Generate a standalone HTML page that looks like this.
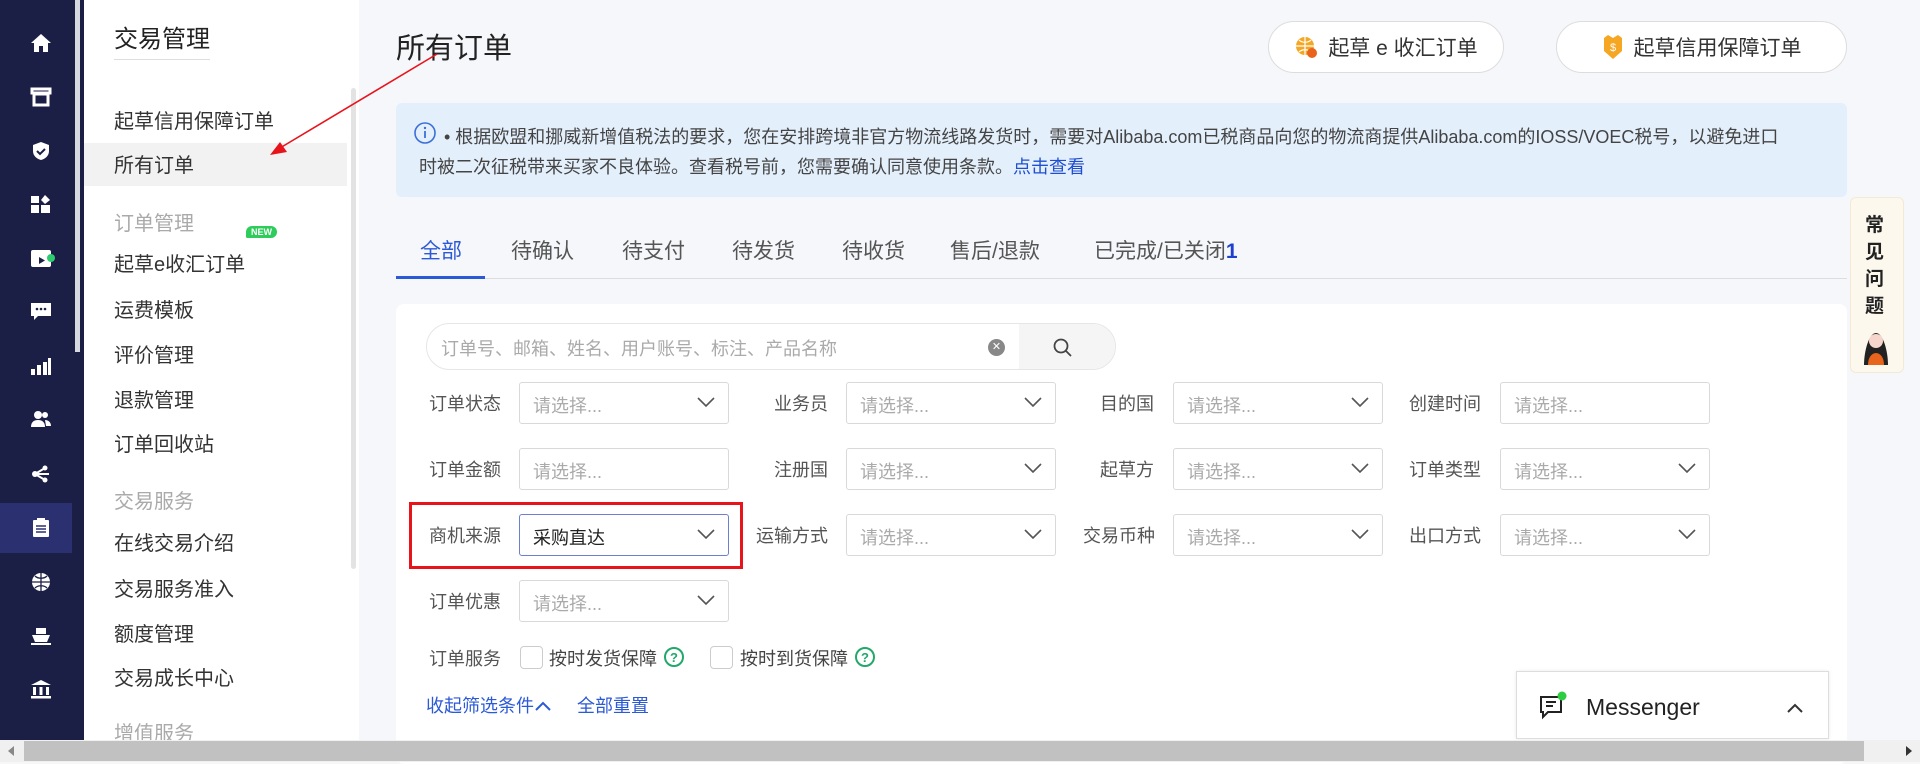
<!DOCTYPE html>
<html><head><meta charset="utf-8"><style>
*{margin:0;padding:0;box-sizing:border-box}
body{width:1920px;height:762px;overflow:hidden;background:#f5f7fa;font-family:"Liberation Sans","Noto Sans CJK SC",sans-serif;position:relative;color:#333}
.a{position:absolute;white-space:nowrap}
.nav{left:0;top:0;width:84px;height:740px;background:#1c1f45}
.ic{position:absolute;left:30px;width:22px;height:20px}
.menu{left:84px;top:0;width:275px;height:740px;background:#fff}
.mi{position:absolute;left:30px;font-size:20px;color:#333}
.mg{color:#aaa}
.btn{position:absolute;top:21px;height:52px;background:#fff;border:1px solid #ddd;border-radius:26px;font-size:21px;color:#333;display:flex;align-items:center;justify-content:center;gap:10px}
.tab{position:absolute;top:235px;font-size:21px;color:#555}
.lbl{position:absolute;font-size:18px;color:#555;text-align:right}
.sel{position:absolute;width:210px;height:42px;border:1px solid #d9d9d9;border-radius:3px;background:#fff;font-size:18px;color:#aaa;padding:9px 13px}
.sel svg{position:absolute;right:12px;top:13px}
</style></head><body>
<div class="a nav">
<div class="a" style="left:75px;top:0;width:5px;height:352px;background:#d8d8e0"></div>
<div class="a" style="left:0;top:503px;width:72px;height:50px;background:#2b3070"></div>
<svg class="ic" style="top:33px" viewBox="0 0 22 20"><path d="M11 1L1 10h3v9h5v-6h4v6h5v-9h3z" fill="#fff"/></svg>
<svg class="ic" style="top:87px" viewBox="0 0 22 20"><path d="M2 2h18v4H2zM4 7h14v11H4z" fill="none" stroke="#fff" stroke-width="3"/></svg>
<svg class="ic" style="top:141px" viewBox="0 0 22 20"><path d="M11 1l8 3v6c0 5-4 8-8 9-4-1-8-4-8-9V4z" fill="#fff"/><path d="M7 10l3 3 5-5" stroke="#1c1f45" stroke-width="2" fill="none"/></svg>
<svg class="ic" style="top:194px" viewBox="0 0 22 20"><rect x="1" y="2" width="8" height="7" fill="#fff"/><rect x="1" y="11" width="8" height="8" fill="#fff"/><rect x="11" y="11" width="9" height="8" fill="#fff"/><path d="M15 1l5 5-5 4-4-4z" fill="#fff"/></svg>
<svg class="ic" style="top:248px;width:26px" viewBox="0 0 26 20"><rect x="1" y="2" width="20" height="17" rx="2" fill="#fff"/><path d="M9 9v7l6-3.5z" fill="#1c1f45"/><circle cx="21" cy="10" r="4" fill="#2ecc71"/></svg>
<svg class="ic" style="top:301px" viewBox="0 0 22 20"><path d="M1 2h20v13H8l-4 4v-4H1z" fill="#fff"/><circle cx="7" cy="8" r="1.3" fill="#1c1f45"/><circle cx="11" cy="8" r="1.3" fill="#1c1f45"/><circle cx="15" cy="8" r="1.3" fill="#1c1f45"/></svg>
<svg class="ic" style="top:356px" viewBox="0 0 22 20"><rect x="1" y="13" width="4" height="6" fill="#fff"/><rect x="7" y="9" width="4" height="10" fill="#fff"/><rect x="13" y="6" width="4" height="13" fill="#fff"/><rect x="18" y="2" width="3" height="17" fill="#fff"/></svg>
<svg class="ic" style="top:409px" viewBox="0 0 22 20"><circle cx="8" cy="6" r="4" fill="#fff"/><path d="M1 18c0-5 3-7 7-7s7 2 7 7z" fill="#fff"/><circle cx="15" cy="6" r="3" fill="#fff"/><path d="M15 11c3 0 6 2 6 6h-5z" fill="#fff"/></svg>
<svg class="ic" style="top:464px" viewBox="0 0 22 20"><circle cx="5" cy="10" r="3" fill="#fff"/><circle cx="15" cy="4" r="2.5" fill="#fff"/><circle cx="15" cy="16" r="2.5" fill="#fff"/><path d="M5 10L15 4M5 10l14 0M5 10l10 6" stroke="#fff" stroke-width="2"/></svg>
<svg class="ic" style="top:518px" viewBox="0 0 22 20"><rect x="3" y="2" width="16" height="17" rx="1" fill="#fff"/><rect x="7" y="0" width="8" height="4" fill="#fff"/><path d="M6 8h10M6 11h10M6 14h10" stroke="#2b3070" stroke-width="1.5"/></svg>
<svg class="ic" style="top:572px" viewBox="0 0 22 20"><circle cx="11" cy="10" r="9" fill="#fff"/><path d="M2 10h18M11 1v18M5 4c3 3 9 3 12 0M5 16c3-3 9-3 12 0" stroke="#1c1f45" stroke-width="1.3" fill="none"/></svg>
<svg class="ic" style="top:626px" viewBox="0 0 22 20"><rect x="6" y="2" width="10" height="6" fill="#fff"/><path d="M2 9h18l-3 7H5z" fill="#fff"/><path d="M1 18h20" stroke="#fff" stroke-width="2"/></svg>
<svg class="ic" style="top:679px" viewBox="0 0 22 20"><path d="M11 1L1 6h20z" fill="#fff"/><rect x="3" y="8" width="3" height="8" fill="#fff"/><rect x="9.5" y="8" width="3" height="8" fill="#fff"/><rect x="16" y="8" width="3" height="8" fill="#fff"/><rect x="1" y="17" width="20" height="2.5" fill="#fff"/></svg>
</div>
<div class="a menu">
<div class="a" style="left:30px;top:19px;font-size:24px;color:#222;border-bottom:1px solid #ddd;padding-bottom:5px">交易管理</div>
<div class="a" style="left:0;top:143px;width:263px;height:43px;background:#f2f2f2"></div>
<div class="mi" style="top:105px">起草信用保障订单</div>
<div class="mi" style="top:149px">所有订单</div>
<div class="mi mg" style="top:207px">订单管理</div>
<div class="a" style="left:162px;top:226px;background:#2ecc5a;color:#fff;font-size:9px;font-weight:bold;padding:1px 5px;border-radius:8px 8px 8px 2px">NEW</div>
<div class="mi" style="top:248px">起草e收汇订单</div>
<div class="mi" style="top:294px">运费模板</div>
<div class="mi" style="top:339px">评价管理</div>
<div class="mi" style="top:384px">退款管理</div>
<div class="mi" style="top:428px">订单回收站</div>
<div class="mi mg" style="top:485px">交易服务</div>
<div class="mi" style="top:527px">在线交易介绍</div>
<div class="mi" style="top:573px">交易服务准入</div>
<div class="mi" style="top:618px">额度管理</div>
<div class="mi" style="top:662px">交易成长中心</div>
<div class="mi mg" style="top:717px">增值服务</div>
<div class="a" style="left:267px;top:88px;width:5px;height:481px;background:#e3e3e3;border-radius:3px"></div>
</div>
<div class="a" style="left:396px;top:25px;font-size:29px;color:#222">所有订单</div>
<div class="btn" style="left:1268px;width:236px"><svg width="24" height="24" viewBox="0 0 24 24"><circle cx="11" cy="11" r="9" fill="#f5a623"/><path d="M2 11h18M11 2v18M5 5c3 3 9 3 12 0M5 17c3-3 9-3 12 0" stroke="#fff" stroke-width="1.2" fill="none"/><circle cx="18" cy="18" r="5" fill="#e8641c"/></svg>起草 e 收汇订单</div>
<div class="btn" style="left:1556px;width:291px"><svg width="22" height="26" viewBox="0 0 22 26"><path d="M2 4l4-3 5 3 5-3 4 3v13l-9 8-9-8z" fill="#f5a623"/><text x="11" y="17" font-size="11" fill="#fff" text-anchor="middle" font-family="Liberation Sans">$</text></svg>起草信用保障订单</div>
<div class="a" style="left:396px;top:103px;width:1451px;height:94px;background:#e4effc;border-radius:6px"></div>
<svg class="a" style="left:413px;top:121px" width="24" height="24" viewBox="0 0 24 24"><circle cx="12" cy="12" r="10" fill="none" stroke="#3b6fd8" stroke-width="1.6"/><path d="M12 10v7" stroke="#3b6fd8" stroke-width="1.8"/><circle cx="12" cy="7" r="1.2" fill="#3b6fd8"/></svg>
<div class="a" style="left:444px;top:123px;font-size:18px;color:#444">• 根据欧盟和挪威新增值税法的要求，您在安排跨境非官方物流线路发货时，需要对Alibaba.com已税商品向您的物流商提供Alibaba.com的IOSS/VOEC税号，以避免进口</div>
<div class="a" style="left:419px;top:153px;font-size:18px;color:#444">时被二次征税带来买家不良体验。查看税号前，您需要确认同意使用条款。<span style="color:#1f4fd0">点击查看</span></div>
<div class="tab" style="left:420px;color:#2c5ad6">全部</div>
<div class="tab" style="left:511px">待确认</div>
<div class="tab" style="left:622px">待支付</div>
<div class="tab" style="left:732px">待发货</div>
<div class="tab" style="left:842px">待收货</div>
<div class="tab" style="left:950px">售后/退款</div>
<div class="tab" style="left:1094px">已完成/已关闭<b style="color:#1f3fd0">1</b></div>
<div class="a" style="left:396px;top:278px;width:1451px;height:1px;background:#ddd"></div>
<div class="a" style="left:396px;top:276px;width:89px;height:3px;background:#2c5ad6"></div>
<div class="a" style="left:396px;top:304px;width:1451px;height:460px;background:#fff;border-radius:8px"></div>
<div class="a" style="left:426px;top:323px;width:690px;height:47px;border:1px solid #e6e6e6;border-radius:24px;overflow:hidden">
<div class="a" style="left:14px;top:11px;font-size:18px;color:#aaa">订单号、邮箱、姓名、用户账号、标注、产品名称</div>
<div class="a" style="left:561px;top:15px;width:17px;height:17px;border-radius:50%;background:#888;color:#fff;font-size:11px;text-align:center;line-height:17px">✕</div>
<div class="a" style="left:592px;top:0;width:100px;height:47px;background:#f5f5f5"></div>
<svg class="a" style="left:625px;top:13px" width="22" height="22" viewBox="0 0 22 22"><circle cx="9" cy="9" r="6.5" fill="none" stroke="#444" stroke-width="1.8"/><path d="M14 14l5 5" stroke="#444" stroke-width="1.8"/></svg>
</div>
<!-- rows -->
<div class="lbl" style="left:429px;top:390px">订单状态</div>
<div class="sel" style="left:519px;top:382px">请选择...<svg width="20" height="12"><path d="M2 2l8 8 8-8" stroke="#555" stroke-width="1.6" fill="none"/></svg></div>
<div class="lbl" style="left:774px;top:390px">业务员</div>
<div class="sel" style="left:846px;top:382px">请选择...<svg width="20" height="12"><path d="M2 2l8 8 8-8" stroke="#555" stroke-width="1.6" fill="none"/></svg></div>
<div class="lbl" style="left:1100px;top:390px">目的国</div>
<div class="sel" style="left:1173px;top:382px">请选择...<svg width="20" height="12"><path d="M2 2l8 8 8-8" stroke="#555" stroke-width="1.6" fill="none"/></svg></div>
<div class="lbl" style="left:1409px;top:390px">创建时间</div>
<div class="sel" style="left:1500px;top:382px">请选择...</div>

<div class="lbl" style="left:429px;top:456px">订单金额</div>
<div class="sel" style="left:519px;top:448px">请选择...</div>
<div class="lbl" style="left:774px;top:456px">注册国</div>
<div class="sel" style="left:846px;top:448px">请选择...<svg width="20" height="12"><path d="M2 2l8 8 8-8" stroke="#555" stroke-width="1.6" fill="none"/></svg></div>
<div class="lbl" style="left:1100px;top:456px">起草方</div>
<div class="sel" style="left:1173px;top:448px">请选择...<svg width="20" height="12"><path d="M2 2l8 8 8-8" stroke="#555" stroke-width="1.6" fill="none"/></svg></div>
<div class="lbl" style="left:1409px;top:456px">订单类型</div>
<div class="sel" style="left:1500px;top:448px">请选择...<svg width="20" height="12"><path d="M2 2l8 8 8-8" stroke="#555" stroke-width="1.6" fill="none"/></svg></div>

<div class="a" style="left:409px;top:502px;width:334px;height:67px;border:3px solid #e8141c"></div>
<div class="lbl" style="left:429px;top:522px">商机来源</div>
<div class="sel" style="left:519px;top:514px;border-color:#6c7fd0;color:#222">采购直达<svg width="20" height="12"><path d="M2 2l8 8 8-8" stroke="#555" stroke-width="1.6" fill="none"/></svg></div>
<div class="lbl" style="left:756px;top:522px">运输方式</div>
<div class="sel" style="left:846px;top:514px">请选择...<svg width="20" height="12"><path d="M2 2l8 8 8-8" stroke="#555" stroke-width="1.6" fill="none"/></svg></div>
<div class="lbl" style="left:1083px;top:522px">交易币种</div>
<div class="sel" style="left:1173px;top:514px">请选择...<svg width="20" height="12"><path d="M2 2l8 8 8-8" stroke="#555" stroke-width="1.6" fill="none"/></svg></div>
<div class="lbl" style="left:1409px;top:522px">出口方式</div>
<div class="sel" style="left:1500px;top:514px">请选择...<svg width="20" height="12"><path d="M2 2l8 8 8-8" stroke="#555" stroke-width="1.6" fill="none"/></svg></div>

<div class="lbl" style="left:429px;top:588px">订单优惠</div>
<div class="sel" style="left:519px;top:580px">请选择...<svg width="20" height="12"><path d="M2 2l8 8 8-8" stroke="#555" stroke-width="1.6" fill="none"/></svg></div>

<div class="lbl" style="left:429px;top:645px">订单服务</div>
<div class="a" style="left:520px;top:646px;width:23px;height:23px;border:1px solid #ccc;border-radius:4px"></div>
<div class="a" style="left:549px;top:645px;font-size:18px;color:#444">按时发货保障</div>
<svg class="a" style="left:663px;top:646px" width="22" height="22"><circle cx="11" cy="11" r="9" fill="none" stroke="#22a86a" stroke-width="2"/><text x="11" y="16" font-size="13" font-weight="bold" fill="#22a86a" text-anchor="middle" font-family="Liberation Sans">?</text></svg>
<div class="a" style="left:710px;top:646px;width:23px;height:23px;border:1px solid #ccc;border-radius:4px"></div>
<div class="a" style="left:740px;top:645px;font-size:18px;color:#444">按时到货保障</div>
<svg class="a" style="left:854px;top:646px" width="22" height="22"><circle cx="11" cy="11" r="9" fill="none" stroke="#22a86a" stroke-width="2"/><text x="11" y="16" font-size="13" font-weight="bold" fill="#22a86a" text-anchor="middle" font-family="Liberation Sans">?</text></svg>
<div class="a" style="left:426px;top:692px;font-size:18px;color:#2c5ad6">收起筛选条件<svg width="18" height="12"><path d="M2 10l7-7 7 7" stroke="#2c5ad6" stroke-width="2" fill="none"/></svg></div>
<div class="a" style="left:577px;top:692px;font-size:18px;color:#2c5ad6">全部重置</div>

<div class="a" style="left:1516px;top:671px;width:313px;height:68px;background:#fff;border:1px solid #ddd;box-shadow:0 0 4px rgba(0,0,0,.08)"></div>
<svg class="a" style="left:1538px;top:691px" width="30" height="30" viewBox="0 0 30 30"><path d="M3 6h20v15H10l-5 5v-5H3z" fill="none" stroke="#222" stroke-width="2"/><path d="M8 11h10M8 15h7" stroke="#222" stroke-width="2"/><circle cx="24" cy="5" r="4.5" fill="#2ecc40"/></svg>
<div class="a" style="left:1586px;top:694px;font-size:23px;color:#222">Messenger</div>
<svg class="a" style="left:1786px;top:702px" width="18" height="12"><path d="M2 10l7-7 7 7" stroke="#333" stroke-width="2" fill="none"/></svg>

<div class="a" style="left:1850px;top:197px;width:54px;height:176px;background:#fdf8ee;border:1px solid #f3ead5;border-radius:6px"></div>
<div class="a" style="left:1865px;top:212px;font-size:19px;font-weight:bold;color:#222;line-height:27px;white-space:normal;width:24px">常见问题</div>
<svg class="a" style="left:1856px;top:325px" width="40" height="42" viewBox="0 0 40 42"><path d="M8 40c0-14 5-32 12-32s12 18 12 32z" fill="#222"/><circle cx="20" cy="16" r="7" fill="#f6d6cc"/><path d="M12 40c0-8 4-12 8-12s8 4 8 12z" fill="#e8641c"/></svg>

<div class="a" style="left:0;top:740px;width:1920px;height:22px;background:#f0f0f0"></div>
<div class="a" style="left:24px;top:741px;width:1840px;height:20px;background:#c1c1c1"></div>
<svg class="a" style="left:6px;top:745px" width="10" height="12"><path d="M8 1L2 6l6 5z" fill="#888"/></svg>
<svg class="a" style="left:1904px;top:745px" width="10" height="12"><path d="M2 1l6 5-6 5z" fill="#333"/></svg>

<svg class="a" style="left:0;top:0" width="1920" height="762" pointer-events="none"><path d="M437 54L280 148" stroke="#e8141c" stroke-width="1.6"/><path d="M270 155l17-3-7-10z" fill="#e8141c"/></svg>
</body></html>
